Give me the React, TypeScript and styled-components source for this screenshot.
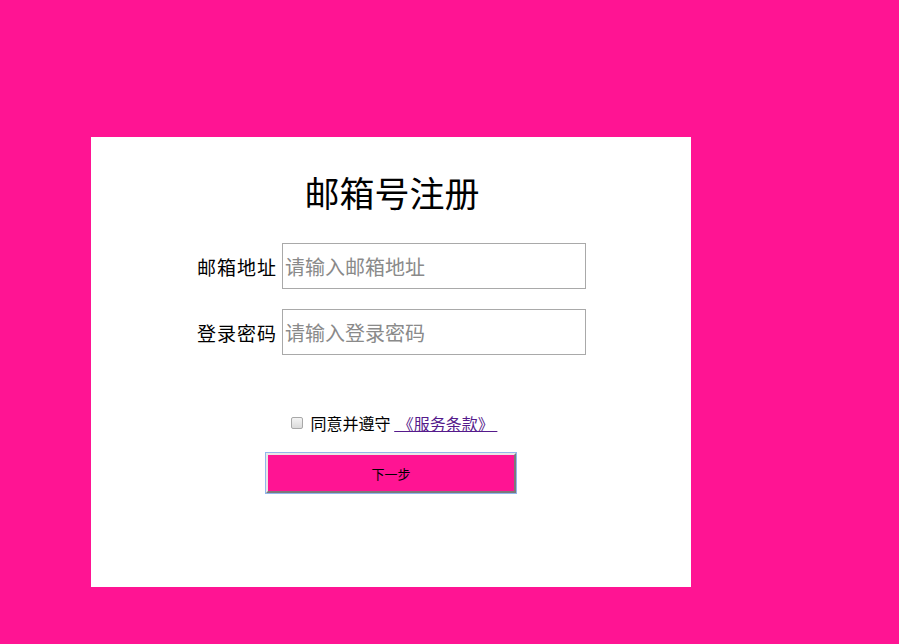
import React from "react";
import styled, { createGlobalStyle } from "styled-components";

const Global = createGlobalStyle`
  html, body { margin: 0; padding: 0; background: #ff1493; }
  body { font-family: "Noto Sans CJK SC", "Noto Sans", sans-serif; color: #000; }
`;

const Page = styled.div`
  min-height: 644px;
  padding: 137px 0 0 91px;
  box-sizing: border-box;
`;

const Card = styled.div`
  width: 600px;
  height: 450px;
  background: #fff;
  display: flex;
  flex-direction: column;
  align-items: center;
  padding-top: 35px;
  box-sizing: border-box;
`;

const Title = styled.h1`
  margin: 0 0 31px 0;
  font-size: 35px;
  line-height: 40px;
  font-weight: 400;
  padding-left: 2px;
`;

const Form = styled.form`
  display: flex;
  flex-direction: column;
  align-items: center;
  gap: 20px;
  width: 100%;
`;

const Row = styled.div`
  display: flex;
  align-items: center;
  justify-content: center;
  gap: 5px;
  height: 46px;
`;

const Label = styled.label`
  font-size: 19px;
  width: 81px;
  text-align: right;
  white-space: nowrap;
  letter-spacing: 1px;
`;

const Input = styled.input`
  width: 304px;
  height: 46px;
  box-sizing: border-box;
  border: 1px solid #a9a9a9;
  padding: 0 2px;
  font-family: inherit;
  font-size: 20px;
  outline: none;
  &::placeholder { color: #8a8a8a; }
`;

const AgreeRow = styled.div`
  display: flex;
  align-items: center;
  justify-content: center;
  margin-top: 37px;
  height: 22px;
  font-size: 16px;
  padding-left: 6px;
`;

const Check = styled.input`
  appearance: none;
  width: 12px;
  height: 12px;
  margin: 0 8px 0 0;
  border: 1px solid #a8a8a8;
  border-radius: 2px;
  background: linear-gradient(#f4f4f4, #dadada);
  box-sizing: border-box;
`;

const AgreeText = styled.span`
  white-space: pre;
`;

const Terms = styled.a`
  color: #551a8b;
  text-decoration: underline;
  white-space: pre;
`;

const NextButton = styled.button`
  margin-top: -1px;
  width: 250px;
  height: 40px;
  box-sizing: border-box;
  background: #ff1493;
  border: 2px solid;
  border-color: #e8e8e8 #7a7a7a #7a7a7a #e8e8e8;
  box-shadow: 0 0 0 1px #93b6ec;
  font-family: inherit;
  font-size: 13px;
  color: #000;
  padding: 0;
`;

export default function App() {
  return (
    <>
      <Global />
      <Page>
        <Card>
          <Title>邮箱号注册</Title>
          <Form onSubmit={(e) => e.preventDefault()}>
            <Row>
              <Label>邮箱地址</Label>
              <Input placeholder="请输入邮箱地址" />
            </Row>
            <Row>
              <Label>登录密码</Label>
              <Input type="password" placeholder="请输入登录密码" />
            </Row>
            <AgreeRow>
              <Check type="checkbox" />
              <AgreeText>{"同意并遵守 "}</AgreeText>
              <Terms href="#">{" 《服务条款》 "}</Terms>
            </AgreeRow>
            <NextButton type="button">下一步</NextButton>
          </Form>
        </Card>
      </Page>
    </>
  );
}
